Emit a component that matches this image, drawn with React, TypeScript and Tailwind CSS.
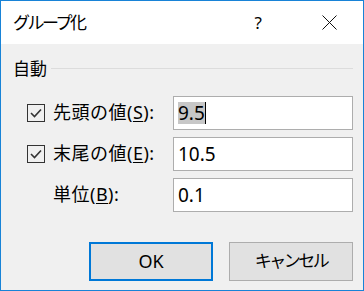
const font = "font-['Noto_Sans','Noto_Sans_CJK_JP',sans-serif]";

function CheckBox() {
  return (
    <div className="flex h-[18px] w-[18px] items-center justify-center border border-[#333333] bg-transparent">
      <svg width="14" height="14" viewBox="0 0 14 14">
        <path d="M2 7 L5.5 10.5 L12 3.5" fill="none" stroke="#333333" strokeWidth="1.6" />
      </svg>
    </div>
  );
}

function Field({ value, selected }: { value: string; selected?: boolean }) {
  return (
    <div className="flex h-[34px] w-[180px] items-center border border-[#adadad] bg-white pl-[4px] text-[19px] text-black">
      {selected ? (
        <>
          <span className="bg-[#c7c7c7] leading-[22px]">{value}</span>
          <span className="h-[22px] w-px bg-black" />
        </>
      ) : (
        <span className="leading-[22px]">{value}</span>
      )}
    </div>
  );
}

function Label({ text, mnemonic }: { text: string; mnemonic: string }) {
  return (
    <span className="text-[18px] tracking-[0.5px] text-black">
      {text}(<span className="underline underline-offset-2">{mnemonic}</span>):
    </span>
  );
}

export default function App() {
  return (
    <div className={`flex h-[291px] w-[364px] flex-col border border-[#1883d7] bg-[#f0f0f0] ${font}`}>
      <div className="flex h-[43px] items-center bg-white pl-[12px] text-[17px] text-black">
        <span className="tracking-[-2.5px]">グループ化</span>
        <span className="ml-auto mr-[60px] text-[17px]">?</span>
        <svg className="mr-[26px]" width="15" height="15" viewBox="0 0 15 15">
          <path d="M0.5 0.5 L14.5 14.5 M14.5 0.5 L0.5 14.5" stroke="#111111" strokeWidth="1" />
        </svg>
      </div>

      <div className="flex items-center gap-[4px] pl-[12px] pr-[10px] pt-[12px]">
        <span className="text-[17px] text-black">自動</span>
        <div className="h-px flex-1 bg-[#dcdcdc]" />
      </div>

      <div className="mt-[14px] flex flex-col gap-[7px] pl-[26px]">
        <div className="flex h-[34px] items-center">
          <CheckBox />
          <span className="ml-[8px] w-[120px]">
            <Label text="先頭の値" mnemonic="S" />
          </span>
          <Field value="9.5" selected />
        </div>
        <div className="flex h-[34px] items-center">
          <CheckBox />
          <span className="ml-[8px] w-[120px]">
            <Label text="末尾の値" mnemonic="E" />
          </span>
          <Field value="10.5" />
        </div>
        <div className="flex h-[34px] items-center">
          <span className="ml-[26px] w-[120px]">
            <Label text="単位" mnemonic="B" />
          </span>
          <Field value="0.1" />
        </div>
      </div>

      <div className="mt-[30px] flex justify-end gap-[16px] pr-[10px]">
        <button className="h-[39px] w-[124px] border-2 border-[#0078d7] bg-[#e1e1e1] text-[18px] text-black">
          OK
        </button>
        <button className="h-[39px] w-[124px] border border-[#adadad] bg-[#e1e1e1] text-[17px] tracking-[-2.5px] text-black">
          キャンセル
        </button>
      </div>
    </div>
  );
}
